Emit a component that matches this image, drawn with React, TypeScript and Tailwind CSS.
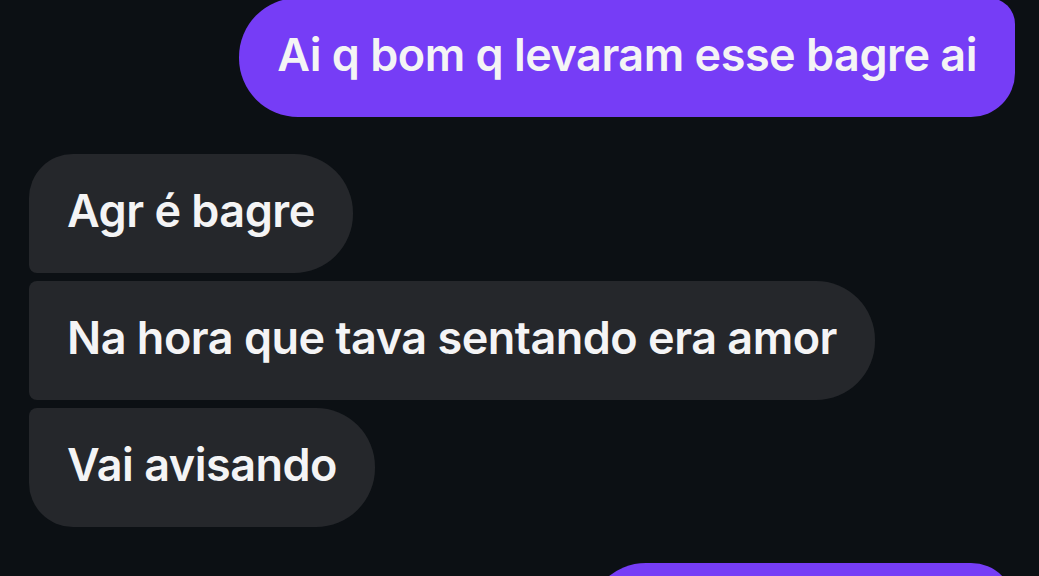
import React from 'react';

type Msg = {
  id: number;
  text: string;
  mine: boolean;
  corners: string;
  gap: string;
};

const MESSAGES: Msg[] = [
  {
    id: 1,
    text: 'Ai q bom q levaram esse bagre ai',
    mine: true,
    corners: 'rounded-l-[59px] rounded-tr-[26px] rounded-br-[44px]',
    gap: 'mt-[-2px]',
  },
  {
    id: 2,
    text: 'Agr é bagre',
    mine: false,
    corners: 'rounded-r-[59px] rounded-tl-[44px] rounded-bl-[8px]',
    gap: 'mt-[37px]',
  },
  {
    id: 3,
    text: 'Na hora que tava sentando era amor',
    mine: false,
    corners: 'rounded-r-[59px] rounded-l-[8px]',
    gap: 'mt-[8px]',
  },
  {
    id: 4,
    text: 'Vai avisando',
    mine: false,
    corners: 'rounded-r-[59px] rounded-tl-[8px] rounded-bl-[44px]',
    gap: 'mt-[8px]',
  },
];

export default function App() {
  return (
    <div
      className="w-[1039px] h-[576px] overflow-hidden bg-[#0c1014] flex flex-col pl-[29px] pr-[24px]"
      style={{ fontFamily: 'Inter, "Noto Sans", sans-serif' }}
    >
      {MESSAGES.map((m) => (
        <div
          key={m.id}
          className={`${m.gap} ${m.corners} h-[119px] shrink-0 flex items-center px-[38px] pb-[6px] text-[45px] font-semibold text-[#f4f4f5] tracking-[-0.5px] whitespace-nowrap ${
            m.mine ? 'self-end bg-[#763df6]' : 'self-start bg-[#25272b]'
          }`}
        >
          {m.text}
        </div>
      ))}
      {/* next outgoing bubble, only its top edge is on screen */}
      <div className="mt-[36px] self-end w-[428px] h-[119px] shrink-0 bg-[#763df6] rounded-l-[59px] rounded-tr-[44px] rounded-br-[26px]" />
    </div>
  );
}
